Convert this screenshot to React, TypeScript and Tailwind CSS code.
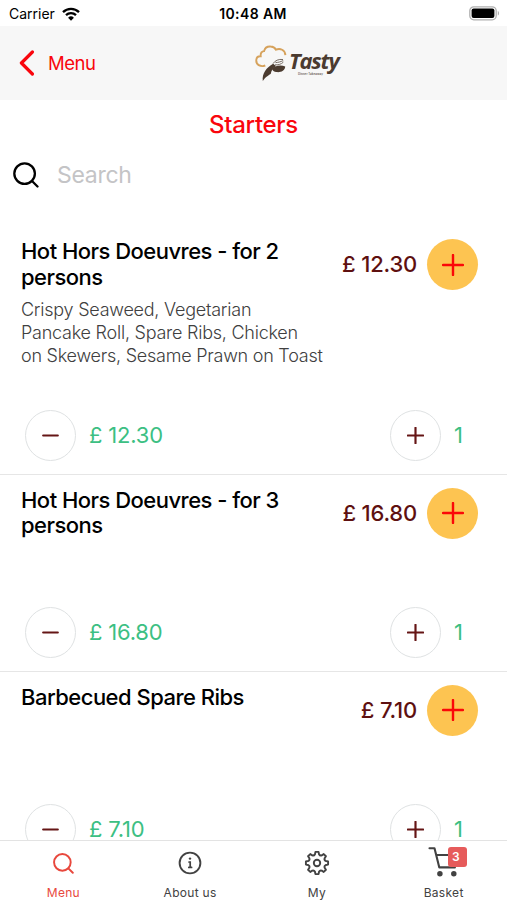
type Item = {
  name: string;
  description?: string;
  price: string;
  quantity: number;
};

const items: Item[] = [
  {
    name: "Hot Hors Doeuvres - for 2 persons",
    description: "Crispy Seaweed, Vegetarian\nPancake Roll, Spare Ribs, Chicken\non Skewers, Sesame Prawn on Toast",
    price: "£ 12.30",
    quantity: 1,
  },
  { name: "Hot Hors Doeuvres - for 3 persons", price: "£ 16.80", quantity: 1 },
  { name: "Barbecued Spare Ribs", price: "£ 7.10", quantity: 1 },
];

function PlusIcon({ className }: { className: string }) {
  return (
    <svg viewBox="0 0 22 22" className={className} fill="none" stroke="currentColor" strokeLinecap="round">
      <path d="M11 1v20M1 11h20" />
    </svg>
  );
}

function SearchIcon({ className }: { className: string }) {
  return (
    <svg viewBox="0 0 26 26" className={className} fill="none" stroke="currentColor" strokeLinecap="round">
      <circle cx="11.6" cy="11.6" r="10.3" />
      <path d="m19 19 5.5 5.5" />
    </svg>
  );
}

function InfoIcon() {
  return (
    <svg width="24" height="24" viewBox="0 0 24 24" fill="none" stroke="currentColor" strokeWidth="1.9" strokeLinecap="round">
      <circle cx="12" cy="12" r="10.4" />
      <path d="M11 11h1.2v5.3M10.8 16.4h2.8" strokeWidth="1.7" />
      <circle cx="12" cy="7.6" r="1.2" fill="currentColor" stroke="none" />
    </svg>
  );
}

function polar(deg: number, r: number) {
  const a = (deg * Math.PI) / 180;
  return `${(13 + r * Math.cos(a)).toFixed(2)} ${(13 + r * Math.sin(a)).toFixed(2)}`;
}

// eight teeth with rounded valleys between them
const gearPath =
  [0, 45, 90, 135, 180, 225, 270, 315]
    .map(
      (t, i) =>
        `${i === 0 ? "M" : "L"}${polar(t - 8, 11.2)} L${polar(t + 8, 11.2)} L${polar(t + 13, 9)} Q${polar(t + 22.5, 7.6)} ${polar(t + 32, 9)}`
    )
    .join(" ") + "Z";

function GearIcon() {
  return (
    <svg width="26" height="26" viewBox="0 0 26 26" fill="none" stroke="currentColor" strokeWidth="1.9" strokeLinejoin="round">
      <path d={gearPath} />
      <circle cx="13" cy="13" r="3.2" />
    </svg>
  );
}

function CartIcon() {
  return (
    <svg width="32" height="34" viewBox="0 0 32 34" fill="none" stroke="currentColor" strokeWidth="2.1" strokeLinecap="round" strokeLinejoin="round">
      <path d="M1.5 2.2h5l4.8 19.2h15.6M8.3 9h19.5l-2.5 9.5" />
      <circle cx="11.9" cy="27.8" r="1.7" fill="currentColor" />
      <circle cx="25.8" cy="27.8" r="1.7" fill="currentColor" />
    </svg>
  );
}

function StatusBar() {
  return (
    <div className="flex h-[26px] shrink-0 items-center justify-between bg-white pt-px pr-[7px] pl-[9px] text-[14px] text-black">
      <div className="flex w-[90px] items-center gap-[7px]">
        <span>Carrier</span>
        <svg width="18" height="14" viewBox="0 0 18 14" fill="none" stroke="black" strokeWidth="2.3">
          <path d="M1 5.1a11.4 11.4 0 0 1 16 0" />
          <path d="M4 8.2a7.2 7.2 0 0 1 10 0" />
          <path d="M9 13.8 6.1 10.8a4.1 4.1 0 0 1 5.8 0Z" fill="black" stroke="none" />
        </svg>
      </div>
      <span className="mr-[3px] text-[14px] font-semibold tracking-[0.4px]">10:48 AM</span>
      <div className="flex w-[90px] justify-end">
        <svg width="31" height="15" viewBox="0 0 31 15">
          <rect x="0.8" y="0.8" width="26.4" height="13" rx="4" fill="white" stroke="#b0b0b0" strokeWidth="1.3" />
          <rect x="2.6" y="2.6" width="22.8" height="9.4" rx="2" fill="black" />
          <path d="M28.8 5v4.6c1.7-.7 1.7-3.9 0-4.6Z" fill="#b0b0b0" />
        </svg>
      </div>
    </div>
  );
}

function Logo() {
  return (
    <div className="flex h-9 w-[86px] items-start">
      <svg width="34" height="38" viewBox="0 0 34 38" className="shrink-0" fill="none">
        <path
          d="M10.3 20.5C5.4 22.4.8 19.6 1.3 14.8c.3-2.6 2.3-3.7 4.4-3.5-.3-2.8.9-4.9 3.4-5.2C9.8 3 12.6 1.3 15.6 1.5c2.5.1 4.2 1.2 5.4 3.2 4-2 9.2.3 9.4 5.4"
          stroke="#d6a25c"
          strokeWidth="1.9"
        />
        <path d="M7.8 36c-.9-7.6 3.6-13.4 10.4-17.2l2.8 2.1c-3.3 2.2-4.8 4.8-5.2 7.9-1.6 1.4-4.9 2.6-8 7.2Z" fill="#4b3b30" />
        <path d="M17 24.3c1.9-3.4 8.5-4.7 13.2-2.8-.2 4.7-5.1 6.2-9 5.5-2-.1-3-1-4.2-2.7Z" fill="#4b3b30" />
        <path d="M18 18.6c2-3 5.5-4.7 10-4.1M20 19.8c2.6.4 6.1-.4 8.4-2.7M20.5 17.6c2.3-.1 4.9-.6 7.7-2" stroke="#786d65" strokeWidth="1" />
      </svg>
      <div className="flex flex-col pt-[3px]">
        <span className="font-['Open_Sans'] text-[22px] leading-[25px] font-bold tracking-[-1.2px] text-[#4b3b30] italic">Tasty</span>
        <span className="-mt-px ml-[9px] text-[3px] leading-[4px] font-semibold whitespace-nowrap text-[#6f635b]">Dinner Takeaway</span>
      </div>
    </div>
  );
}

function Header() {
  return (
    <header className="flex h-[74px] shrink-0 items-center bg-[#f7f7f7]">
      <a className="flex w-[255px] items-center gap-[13px] pl-[19px] text-[18.5px] tracking-[-0.5px] text-[#f9060d]">
        <svg width="16" height="26" viewBox="0 0 16 26" fill="none" stroke="currentColor" strokeWidth="3.2" strokeLinecap="round" strokeLinejoin="round">
          <path d="M13.4 2 2.4 13l11 11" />
        </svg>
        <span className="pt-px">Menu</span>
      </a>
      <Logo />
    </header>
  );
}

function MenuItem({ item }: { item: Item }) {
  return (
    <li className="border-b border-[#e6e6e6] pt-[13px] pb-[12.5px]">
      <div className="flex min-h-[119.5px] items-start pr-[29px] pl-[21px]">
        <div className="w-[304px] shrink-0">
          <h2 className="w-[280px] text-[22px] leading-[25.5px] font-medium tracking-[-0.52px] text-black">{item.name}</h2>
          {item.description && (
            <p className="mt-[8px] mb-[42.4px] text-[18px] leading-[23.2px] font-light tracking-[-0.24px] whitespace-pre text-[#404040]">
              {item.description}
            </p>
          )}
        </div>
        <div className="flex flex-1 items-center justify-end gap-[10px]">
          <span className="text-[22px] font-medium tracking-[-0.2px] whitespace-nowrap text-[#5e1010]">{item.price}</span>
          <button className="flex size-[51px] shrink-0 items-center justify-center rounded-full bg-[#fdc451] text-[#fb0808]">
            <PlusIcon className="size-[22px] stroke-[2.4]" />
          </button>
        </div>
      </div>
      <div className="flex items-center pl-[25px] text-[22px] text-[#3cbf83]">
        <button className="flex size-[51px] items-center justify-center rounded-full border border-[#dfe2e3] text-[#651515]">
          <svg width="17" height="3" viewBox="0 0 17 3" stroke="currentColor" strokeWidth="2.2" strokeLinecap="round">
            <path d="M1.2 1.5h14.6" />
          </svg>
        </button>
        <span className="ml-[13px] flex-1 tracking-[-0.2px]">{item.price}</span>
        <button className="flex size-[51px] items-center justify-center rounded-full border border-[#dfe2e3] text-[#651515]">
          <PlusIcon className="size-[17px] stroke-[2.8]" />
        </button>
        <span className="w-[66px] pl-[13px]">{item.quantity}</span>
      </div>
    </li>
  );
}

function TabBar() {
  return (
    <nav className="grid h-[60px] shrink-0 grid-cols-4 border-t border-[#e3e3e3] bg-white text-[12px] tracking-[0.3px] text-[#424242]">
      <a className="flex flex-col items-center text-[#e8483d]">
        <span className="flex h-[44px] items-center">
          <SearchIcon className="size-[21px] stroke-[2.4]" />
        </span>
        <span className="leading-[15px]">Menu</span>
      </a>
      <a className="flex flex-col items-center">
        <span className="flex h-[44px] items-center">
          <InfoIcon />
        </span>
        <span className="leading-[15px]">About us</span>
      </a>
      <a className="flex flex-col items-center">
        <span className="flex h-[44px] items-center">
          <GearIcon />
        </span>
        <span className="leading-[15px]">My</span>
      </a>
      <a className="flex flex-col items-center">
        <span className="relative flex h-[44px] items-center">
          <CartIcon />
          <span className="absolute top-[6px] left-[20px] flex h-[20px] w-[19.5px] items-center justify-center rounded-[3px] bg-[#e65b5b] pr-[3px] text-[12px] font-semibold tracking-normal text-white">
            3
          </span>
        </span>
        <span className="leading-[15px]">Basket</span>
      </a>
    </nav>
  );
}

export default function App() {
  return (
    <div className="flex h-[900px] w-[507px] flex-col overflow-hidden bg-white font-['Inter',sans-serif]">
      <StatusBar />
      <Header />
      <main className="min-h-0 flex-1 overflow-hidden">
        <h1 className="pt-[9px] text-center text-[24px] leading-[32px] font-medium tracking-[-0.3px] text-[#f9060d]">Starters</h1>
        <div className="flex h-[67px] items-center gap-[18px] pl-[13px]">
          <SearchIcon className="size-[26px] stroke-[2.3]" />
          <span className="pt-px text-[23px] tracking-[-0.3px] text-[#c4c4c6]">Search</span>
        </div>
        <ul className="mt-[18px]">
          {items.map((item) => (
            <MenuItem key={item.name} item={item} />
          ))}
        </ul>
      </main>
      <TabBar />
    </div>
  );
}
